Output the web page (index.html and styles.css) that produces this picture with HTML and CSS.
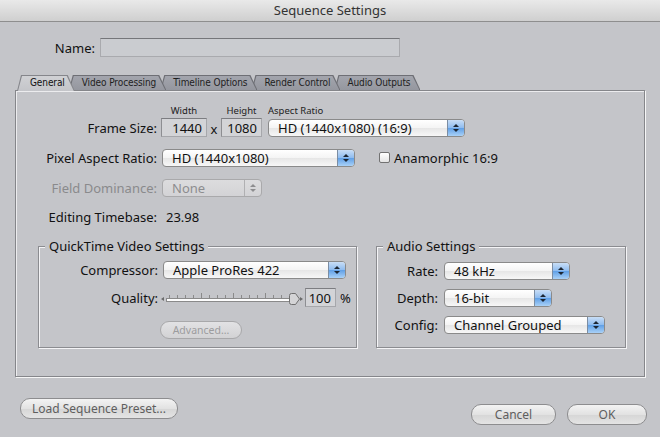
FILE: index.html
```html
<!DOCTYPE html>
<html lang="en">
<head>
    <meta charset="UTF-8">
    <title>Sequence Settings</title>
    <link rel="stylesheet" href="styles.css">
</head>
<body>
    <div class="titlebar">Sequence Settings</div>

    <div class="name-row">
        <label class="name-label" for="seqName">Name:</label>
        <input type="text" id="seqName" class="name-field">
    </div>

    <div class="tabs">
        <span class="tab active">General</span>
        <span class="tab">Video Processing</span>
        <span class="tab">Timeline Options</span>
        <span class="tab">Render Control</span>
        <span class="tab">Audio Outputs</span>
    </div>

    <div class="panel">
        <div class="row heads">
            <span class="label"></span>
            <span class="head w-width">Width</span>
            <span class="times"></span>
            <span class="head w-height">Height</span>
            <span class="head aspect-head">Aspect Ratio</span>
        </div>

        <div class="row">
            <span class="label">Frame Size:</span>
            <span class="numfield w-width">1440</span>
            <span class="times">x</span>
            <span class="numfield w-height">1080</span>
            <div class="popup popup-aspect">
                <span class="popup-text">HD (1440x1080) (16:9)</span>
                <span class="popup-cap"><i class="up"></i><i class="down"></i></span>
            </div>
        </div>

        <div class="row gap-row">
            <span class="label">Pixel Aspect Ratio:</span>
            <div class="popup popup-par">
                <span class="popup-text">HD (1440x1080)</span>
                <span class="popup-cap"><i class="up"></i><i class="down"></i></span>
            </div>
            <span class="checkbox"></span>
            <span class="check-label">Anamorphic 16:9</span>
        </div>

        <div class="row gap-row">
            <span class="label disabled-text">Field Dominance:</span>
            <div class="popup popup-field disabled">
                <span class="popup-text">None</span>
                <span class="popup-cap"><i class="up"></i><i class="down"></i></span>
            </div>
        </div>

        <div class="row timebase-row">
            <span class="label">Editing Timebase:</span>
            <span class="value">23.98</span>
        </div>

        <div class="groups">
            <fieldset class="group qt-group">
                <legend>QuickTime Video Settings</legend>
                <div class="row first-row">
                    <span class="label qt-label">Compressor:</span>
                    <div class="popup popup-comp">
                        <span class="popup-text">Apple ProRes 422</span>
                        <span class="popup-cap"><i class="up"></i><i class="down"></i></span>
                    </div>
                </div>
                <div class="row quality-row">
                    <span class="label qt-label short">Quality:</span>
                    <svg class="slider" width="143" height="16" viewBox="0 0 143 16">
                        <polygon points="1,9 4,7 4,11" fill="#6a6a6a"/>
                        <rect x="6.5" y="8.5" width="126" height="3" fill="#fdfdfd" stroke="#8a8a8a"/>
                        <g stroke="#8a8a8a" stroke-width="1">
                            <line x1="9.5" y1="5" x2="9.5" y2="8"/>
                            <line x1="17.5" y1="5" x2="17.5" y2="8"/>
                            <line x1="25.5" y1="5" x2="25.5" y2="8"/>
                            <line x1="33.5" y1="5" x2="33.5" y2="8"/>
                            <line x1="41.5" y1="3" x2="41.5" y2="8"/>
                            <line x1="49.5" y1="5" x2="49.5" y2="8"/>
                            <line x1="57.5" y1="5" x2="57.5" y2="8"/>
                            <line x1="65.5" y1="5" x2="65.5" y2="8"/>
                            <line x1="73.5" y1="3" x2="73.5" y2="8"/>
                            <line x1="81.5" y1="5" x2="81.5" y2="8"/>
                            <line x1="89.5" y1="5" x2="89.5" y2="8"/>
                            <line x1="97.5" y1="5" x2="97.5" y2="8"/>
                            <line x1="105.5" y1="3" x2="105.5" y2="8"/>
                            <line x1="113.5" y1="5" x2="113.5" y2="8"/>
                            <line x1="121.5" y1="5" x2="121.5" y2="8"/>
                        </g>
                        <path d="M129.5,5.5 Q129.5,3.5 131.5,3.5 L135.5,3.5 L139.5,9 L135.5,14.5 L131.5,14.5 Q129.5,14.5 129.5,12.5 Z" fill="#d4d4d6" stroke="#6f6f6f"/>
                        <polygon points="140,7 143,9 140,11" fill="#6a6a6a"/>
                    </svg>
                    <span class="numfield pct-field">100</span>
                    <span class="pct">%</span>
                </div>
                <div class="adv-row">
                    <span class="btn btn-small disabled-btn">Advanced...</span>
                </div>
            </fieldset>

            <fieldset class="group audio-group">
                <legend>Audio Settings</legend>
                <div class="row first-row a-first">
                    <span class="label audio-label">Rate:</span>
                    <div class="popup popup-rate">
                        <span class="popup-text">48 kHz</span>
                        <span class="popup-cap"><i class="up"></i><i class="down"></i></span>
                    </div>
                </div>
                <div class="row a-row">
                    <span class="label audio-label">Depth:</span>
                    <div class="popup popup-depth">
                        <span class="popup-text">16-bit</span>
                        <span class="popup-cap"><i class="up"></i><i class="down"></i></span>
                    </div>
                </div>
                <div class="row a-row">
                    <span class="label audio-label">Config:</span>
                    <div class="popup popup-config">
                        <span class="popup-text">Channel Grouped</span>
                        <span class="popup-cap"><i class="up"></i><i class="down"></i></span>
                    </div>
                </div>
            </fieldset>
        </div>
    </div>

    <div class="footer">
        <span class="btn btn-preset">Load Sequence Preset...</span>
        <div class="footer-right">
            <span class="btn btn-cancel">Cancel</span>
            <span class="btn btn-ok">OK</span>
        </div>
    </div>
</body>
</html>
```

FILE: styles.css
```css
body {
    margin: 0;
    width: 660px;
    height: 437px;
    overflow: hidden;
    background-color: #c4c5c9;
    font-family: "Noto Sans", "DejaVu Sans", sans-serif;
    font-size: 13px;
    color: #111;
}
.titlebar {
    height: 21px;
    line-height: 21px;
    text-align: center;
    color: #333;
    font-size: 13px;
    background: linear-gradient(#e9e9e9, #cfcfcf);
    border-bottom: 1px solid #8e8e8e;
}

/* name field */
.name-row {
    display: flex;
    align-items: center;
    margin-top: 16px;
    height: 19px;
}
.name-label {
    width: 100px;
    text-align: right;
    padding-right: 5px;
    box-sizing: border-box;
}
.name-field {
    width: 300px;
    height: 19px;
    box-sizing: border-box;
    margin: 0;
    background-color: #caccd0;
    border: 1px solid #a9aaae;
    border-top-color: #75767a;
}

/* tabs */
.tabs {
    display: flex;
    margin-top: 18px;
    margin-left: 17px;
    height: 15px;
    position: relative;
    z-index: 2;
}
.tab {
    position: relative;
    height: 15px;
    line-height: 15px;
    padding: 0 10px 0 13px;
    margin-right: -6px;
    font-family: "DejaVu Sans Condensed", "DejaVu Sans", sans-serif;
    font-stretch: condensed;
    font-size: 10px;
    letter-spacing: -0.1px;
    color: #1e1e1e;
    background: #6e6f75;
    clip-path: polygon(0 100%, 4px 0, calc(100% - 7px) 0, 100% 100%);
}
.tab::before {
    content: "";
    position: absolute;
    top: 1px;
    left: 1px;
    right: 1px;
    bottom: 0;
    z-index: -1;
    background: linear-gradient(#a3a5ad, #95979f);
    clip-path: polygon(0 100%, 4px 0, calc(100% - 7px) 0, 100% 100%);
}
.tab:nth-child(1) { z-index: 5; }
.tab:nth-child(2) { z-index: 4; }
.tab:nth-child(3) { z-index: 3; }
.tab:nth-child(4) { z-index: 2; }
.tab:nth-child(5) { z-index: 1; }
.tab.active {
    height: 16px;
    margin-bottom: -1px;
    color: #111;
    background: #85868b;
}
.tab.active::before {
    background: linear-gradient(#d0d1d4, #c4c5c9);
}

/* main panel */
.panel {
    position: relative;
    z-index: 1;
    margin-left: 15px;
    width: 630px;
    height: 287px;
    box-sizing: border-box;
    border: 1px solid #85868a;
    box-shadow: inset 1px 1px 0 #ececee, 1px 1px 0 #f6f6f6;
}
.row {
    display: flex;
    align-items: center;
    height: 19px;
    margin-top: 11px;
}
.label {
    width: 145px;
    flex-shrink: 0;
    text-align: right;
    padding-right: 4px;
    box-sizing: border-box;
    white-space: nowrap;
}
.heads {
    margin-top: 13px;
    height: 12px;
    margin-bottom: -9px;
}
.head {
    font-size: 9.5px;
    text-align: center;
    color: #222;
}
.aspect-head {
    margin-left: 6px;
    text-align: left;
}
.w-width { width: 46px; }
.w-height { width: 41px; }
.times {
    width: 14px;
    text-align: center;
    padding-top: 3px;
}
.numfield {
    height: 19px;
    line-height: 18px;
    box-sizing: border-box;
    text-align: right;
    padding-right: 4px;
    background-color: #d3d4d7;
    border: 1px solid #a6a7ab;
    border-top-color: #7c7d81;
    border-left-color: #8d8e92;
}
.heads .head {
    background: none;
    border: none;
}

/* popup menus */
.popup {
    display: flex;
    height: 18px;
    box-sizing: border-box;
    border: 1px solid #8a8a8a;
    border-radius: 4px;
    overflow: hidden;
    background: linear-gradient(#ffffff, #f4f4f4 50%, #e6e6e6 51%, #f7f7f7);
    margin-left: 1px;
}
.popup-aspect { width: 197px; margin-left: 6px; }
.popup-par { width: 193px; }
.popup-field { width: 100px; }
.popup-comp { width: 183px; }
.popup-rate { width: 126px; }
.popup-depth { width: 108px; }
.popup-config { width: 161px; }
.popup-text {
    flex: 1;
    line-height: 16px;
    padding-left: 9px;
    white-space: nowrap;
}
.popup-cap {
    width: 16px;
    display: flex;
    flex-direction: column;
    align-items: center;
    justify-content: center;
    gap: 2px;
    border-left: 1px solid #7b8da3;
    background: linear-gradient(#c9def6, #8dbbef 50%, #5f9fe6 51%, #a9d1f7);
}
.popup-cap i {
    width: 0;
    height: 0;
    border-left: 3px solid transparent;
    border-right: 3px solid transparent;
}
.popup-cap .up { border-bottom: 3px solid #1c2633; }
.popup-cap .down { border-top: 3px solid #1c2633; }
.popup.disabled {
    border-color: #a9a9ab;
    background: linear-gradient(#dcdcde, #d3d3d6);
    color: #8d8d8f;
}
.popup.disabled .popup-cap {
    border-left: 1px solid #b0b0b2;
    background: none;
}
.popup.disabled .popup-cap .up { border-bottom-color: #8d8d8f; }
.popup.disabled .popup-cap .down { border-top-color: #8d8d8f; }
.disabled-text { color: #8a8a8c; }

.checkbox {
    width: 11px;
    height: 11px;
    margin-left: 24px;
    box-sizing: border-box;
    border: 1px solid #727272;
    border-radius: 2px;
    background: linear-gradient(#ffffff, #e4e4e4);
}
.check-label {
    margin-left: 4px;
}
.timebase-row {
    margin-top: 10px;
}
.value {
    margin-left: 5px;
}

/* group boxes */
.groups {
    display: flex;
    gap: 19px;
    margin-top: 12px;
    margin-left: 22px;
}
.group {
    margin: 0;
    padding: 0 0 8px 0;
    border: 1px solid #8b8c90;
    box-shadow: inset 1px 1px 0 #f4f4f6, 1px 1px 0 #f4f4f6;
}
.group legend {
    margin-left: 6px;
    padding: 0 4px;
    line-height: 16px;
    background-color: #c4c5c9;
}
.qt-group { width: 319px; box-sizing: border-box; }
.audio-group { width: 250px; box-sizing: border-box; }
.qt-label { width: 123px; }
.qt-label.short { width: 121px; padding-right: 2px; }
.first-row { margin-top: 6px; }
.quality-row { margin-top: 9px; }
.slider { flex-shrink: 0; }
.pct-field {
    width: 31px;
    margin-left: 2px;
}
.pct { margin-left: 4px; }
.adv-row {
    margin-top: 13px;
    padding-left: 121px;
}
.audio-label { width: 66px; padding-right: 5px; }
.a-first { margin-top: 7px; }
.a-row { margin-top: 8px; }

/* buttons */
.btn {
    display: inline-block;
    box-sizing: border-box;
    text-align: center;
    color: #5e5e5e;
    font-size: 12px;
    border: 1px solid #8d8d8f;
    background: linear-gradient(#f3f3f3, #e2e2e2 50%, #d6d6d6 51%, #e4e4e4);
}
.btn-small {
    width: 82px;
    height: 18px;
    line-height: 16px;
    font-size: 10.5px;
    border-radius: 9px;
}
.disabled-btn {
    color: #9c9c9e;
    border-color: #a8a8aa;
    background: linear-gradient(#e2e2e4, #d2d2d4);
}
.footer {
    display: flex;
    justify-content: space-between;
    margin-top: 21px;
    padding: 0 13px 0 20px;
}
.btn-preset {
    width: 158px;
    height: 21px;
    line-height: 19px;
    border-radius: 10px;
}
.footer-right {
    display: flex;
    gap: 11px;
    margin-top: 6px;
}
.btn-cancel,
.btn-ok {
    height: 21px;
    line-height: 19px;
    border-radius: 10px;
}
.btn-cancel { width: 85px; }
.btn-ok { width: 80px; }
```
